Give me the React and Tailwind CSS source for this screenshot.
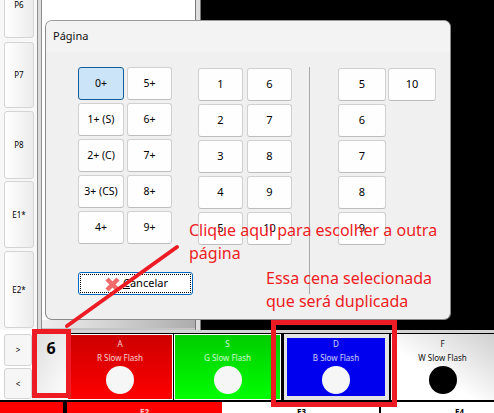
const F = { fontFamily: '"Noto Sans", "Open Sans", sans-serif' };
const Btn = ({ children, w, cls = "" }) => (
  <div className={`h-[33px] rounded-[3px] border border-[#d0d0d0] border-b-[#bdbdbd] bg-[#fefefe] flex items-center justify-center text-[10.5px] text-black ${w} ${cls}`}>{children}</div>
);
const Side = ({ label, cls = "" }) => (
  <div className={`ml-[4px] w-[30px] rounded-[3px] border border-[#d4d4d4] bg-gradient-to-r from-white to-[#ececec] flex items-center justify-center text-[8px] text-black ${cls}`}>{label}</div>
);
const Scene = ({ k, name, bg, dot, text = "text-white/80", cls = "", first = "mt-[3px]" }) => (
  <div className={`flex flex-col items-center ${bg} ${cls}`}>
    <div className={`${first} text-[8px] leading-[12px] ${text}`}>{k}</div>
    <div className={`mt-[2px] text-[8px] leading-[12px] ${text}`}>{name}</div>
    <div className={`mt-[2px] w-[28px] h-[28px] rounded-full ${dot}`} />
  </div>
);
export default function App() {
  const left = ["0+", "5+", "1+ (S)", "6+", "2+ (C)", "7+", "3+ (CS)", "8+", "4+", "9+"];
  return (
    <div className="relative w-[494px] h-[413px] overflow-hidden bg-white" style={F}>
      <div className="flex h-[330px]">
        <div className="w-[37px] flex flex-col -mt-[28px] shrink-0 bg-[#f7f7f7]">
          <Side label="P6" cls="h-[66px]" />
          <Side label="P7" cls="h-[66px] mt-[4px]" />
          <Side label="P8" cls="h-[68px] mt-[3px]" />
          <Side label="E1*" cls="h-[67px] mt-[2px]" />
          <Side label="E2*" cls="h-[77px] mt-[3px]" />
        </div>
        <div className="w-[5px] border-x border-[#8f8f8f] bg-[#dcdcdc] shrink-0" />
        <div className="w-[153px] flex flex-col shrink-0">
          <div className="flex-1 bg-white" />
          <div className="h-[10px] bg-gradient-to-r from-[#f0f0f0] to-[#adadad] border-b-2 border-[#c4c4c4]" />
        </div>
        <div className="w-[6px] bg-[#dedede] border-x border-[#777] shrink-0" />
        <div className="flex-1 bg-black" />
      </div>
      <div className="h-[3px] ml-[37px] bg-[#d4d4d4]" />
      <div className="absolute left-[45px] top-[20px] w-[406px] h-[300px] rounded-[7px] bg-[#f0f0f0] border border-[#8a8a8a] border-t-[#9a9a9a] overflow-hidden">
        <div className="h-[31px] bg-[#f3f3f3] pl-[7px] flex items-center text-[11px] text-[#111]">Página</div>
        <div className="flex pt-[15px] pl-[32px]">
          <div className="w-[120px]">
            <div className="grid grid-cols-[46px_45px] gap-x-[3px] gap-y-[3px]">
              {left.map((t, i) => (
                <Btn key={t} w="w-full" cls={i === 0 ? "!bg-[#cce4f7] !border-[#0f5d9c]" : ""}>{t}</Btn>
              ))}
            </div>
            <div className="mt-[28px] w-[115px] h-[23px] rounded-[3px] border border-[#0067c0] bg-white p-[1px]">
              <div className="h-full border border-dotted border-black flex items-center text-[11px] text-black pl-[42px]">
                <span><span className="underline">C</span>ancelar</span>
              </div>
            </div>
          </div>
          <div className="mt-[1px] grid grid-cols-[45px_45px] gap-x-[4px] gap-y-[3px] h-[177px] content-start">
            {[1, 6, 2, 7, 3, 8, 4, 9, 5, 10].map((t) => <Btn key={t} w="w-[45px]" cls="!text-[11px]">{t}</Btn>)}
          </div>
          <div className="ml-[17px] w-px h-[227px] bg-[#a8a8a8]" />
          <div className="ml-[28px] mt-[1px] grid grid-cols-[48px_48px] gap-x-[2px] gap-y-[3px] content-start">
            <Btn w="w-[48px]" cls="!text-[11px]">5</Btn>
            <Btn w="w-[48px]" cls="!text-[11px]">10</Btn>
            {[6, 7, 8, 9].map((t) => <div key={t} className="col-start-1"><Btn w="w-[48px]" cls="!text-[11px]">{t}</Btn></div>)}
          </div>
        </div>
      </div>
      <div className="flex h-[69px] bg-black pt-px pb-[2px]">
        <div className="w-[32px] -mt-px shrink-0 bg-white flex flex-col gap-[2px] pl-[4px] pt-px">
          <div className="w-[28px] h-[32px] rounded-[3px] border border-[#d4d4d4] bg-[#f6f6f6] flex items-center justify-center text-[8px] text-black">&gt;</div>
          <div className="w-[28px] h-[31px] rounded-[3px] border border-[#d4d4d4] bg-[#f6f6f6] flex items-center justify-center text-[8px] text-black">&lt;</div>
        </div>
        <div className="w-[35px] shrink-0 bg-gradient-to-br from-[#dcdcdc] to-white flex justify-center text-[16px] font-bold text-black pt-[2px] pl-[3px]">6</div>
        <Scene k="A" name="R Slow Flash" bg="bg-gradient-to-b from-[#cc0000] to-[#ff0000] w-[106px] border border-white" dot="bg-[#f6f6f6]" />
        <Scene k="S" name="G Slow Flash" bg="bg-gradient-to-b from-[#00cc00] to-[#00ff00] w-[107px] ml-px border border-white" dot="bg-[#f6f6f6]" />
        <div className="ml-px w-[109px] bg-[#e4e4e4] border-x-2 border-black pl-[3px] pr-[4px] pt-[4px] pb-[4px]">
          <Scene k="D" name="B Slow Flash" bg="bg-[#0000ee] h-[58px]" dot="bg-[#f6f6f6]" first="mt-0" />
        </div>
        <Scene k="F" name="W Slow Flash" bg="bg-gradient-to-bl from-[#d0d0d0] to-white to-60% flex-1" dot="bg-black" text="text-[#111]" first="mt-[4px]" />
      </div>
      <div className="flex h-[11px] overflow-hidden bg-white text-[8px] font-bold">
        <div className="w-[63px] bg-[#ff0000]" />
        <div className="w-[4px] bg-black" />
        <div className="w-[155px] bg-[#ff0000] text-center text-white/80 leading-[20px]">E2</div>
        <div className="w-[159px] text-center text-black leading-[20px] border-r-2 border-black pl-[2px]">E3</div>
        <div className="flex-1 text-center text-black leading-[20px] pl-[44px]">E4</div>
      </div>
      <svg className="absolute left-0 top-0 pointer-events-none" width="494" height="413" fill="none">
        <rect x="34.5" y="331.5" width="34" height="64" stroke="#ed1c24" strokeWidth="5" />
        <rect x="273.5" y="322.5" width="121" height="82" stroke="#ed1c24" strokeWidth="5" />
        <path d="M107 279l11 11M118 279l-11 11" stroke="#ef6a6a" strokeWidth="4.5" />
        <line x1="67" y1="326" x2="177" y2="247" stroke="#ed1c24" strokeWidth="4" strokeLinecap="round" />
      </svg>
      <div className="absolute left-[189px] top-[219px] text-[16px] leading-[23px] text-[#ed1c24] whitespace-nowrap">
        Clique aqui para escolher a outra<br />página
      </div>
      <div className="absolute left-[266px] top-[267px] text-[16px] leading-[23px] text-[#ed1c24] whitespace-nowrap">
        Essa cena selecionada<br />que será duplicada
      </div>
    </div>
  );
}
